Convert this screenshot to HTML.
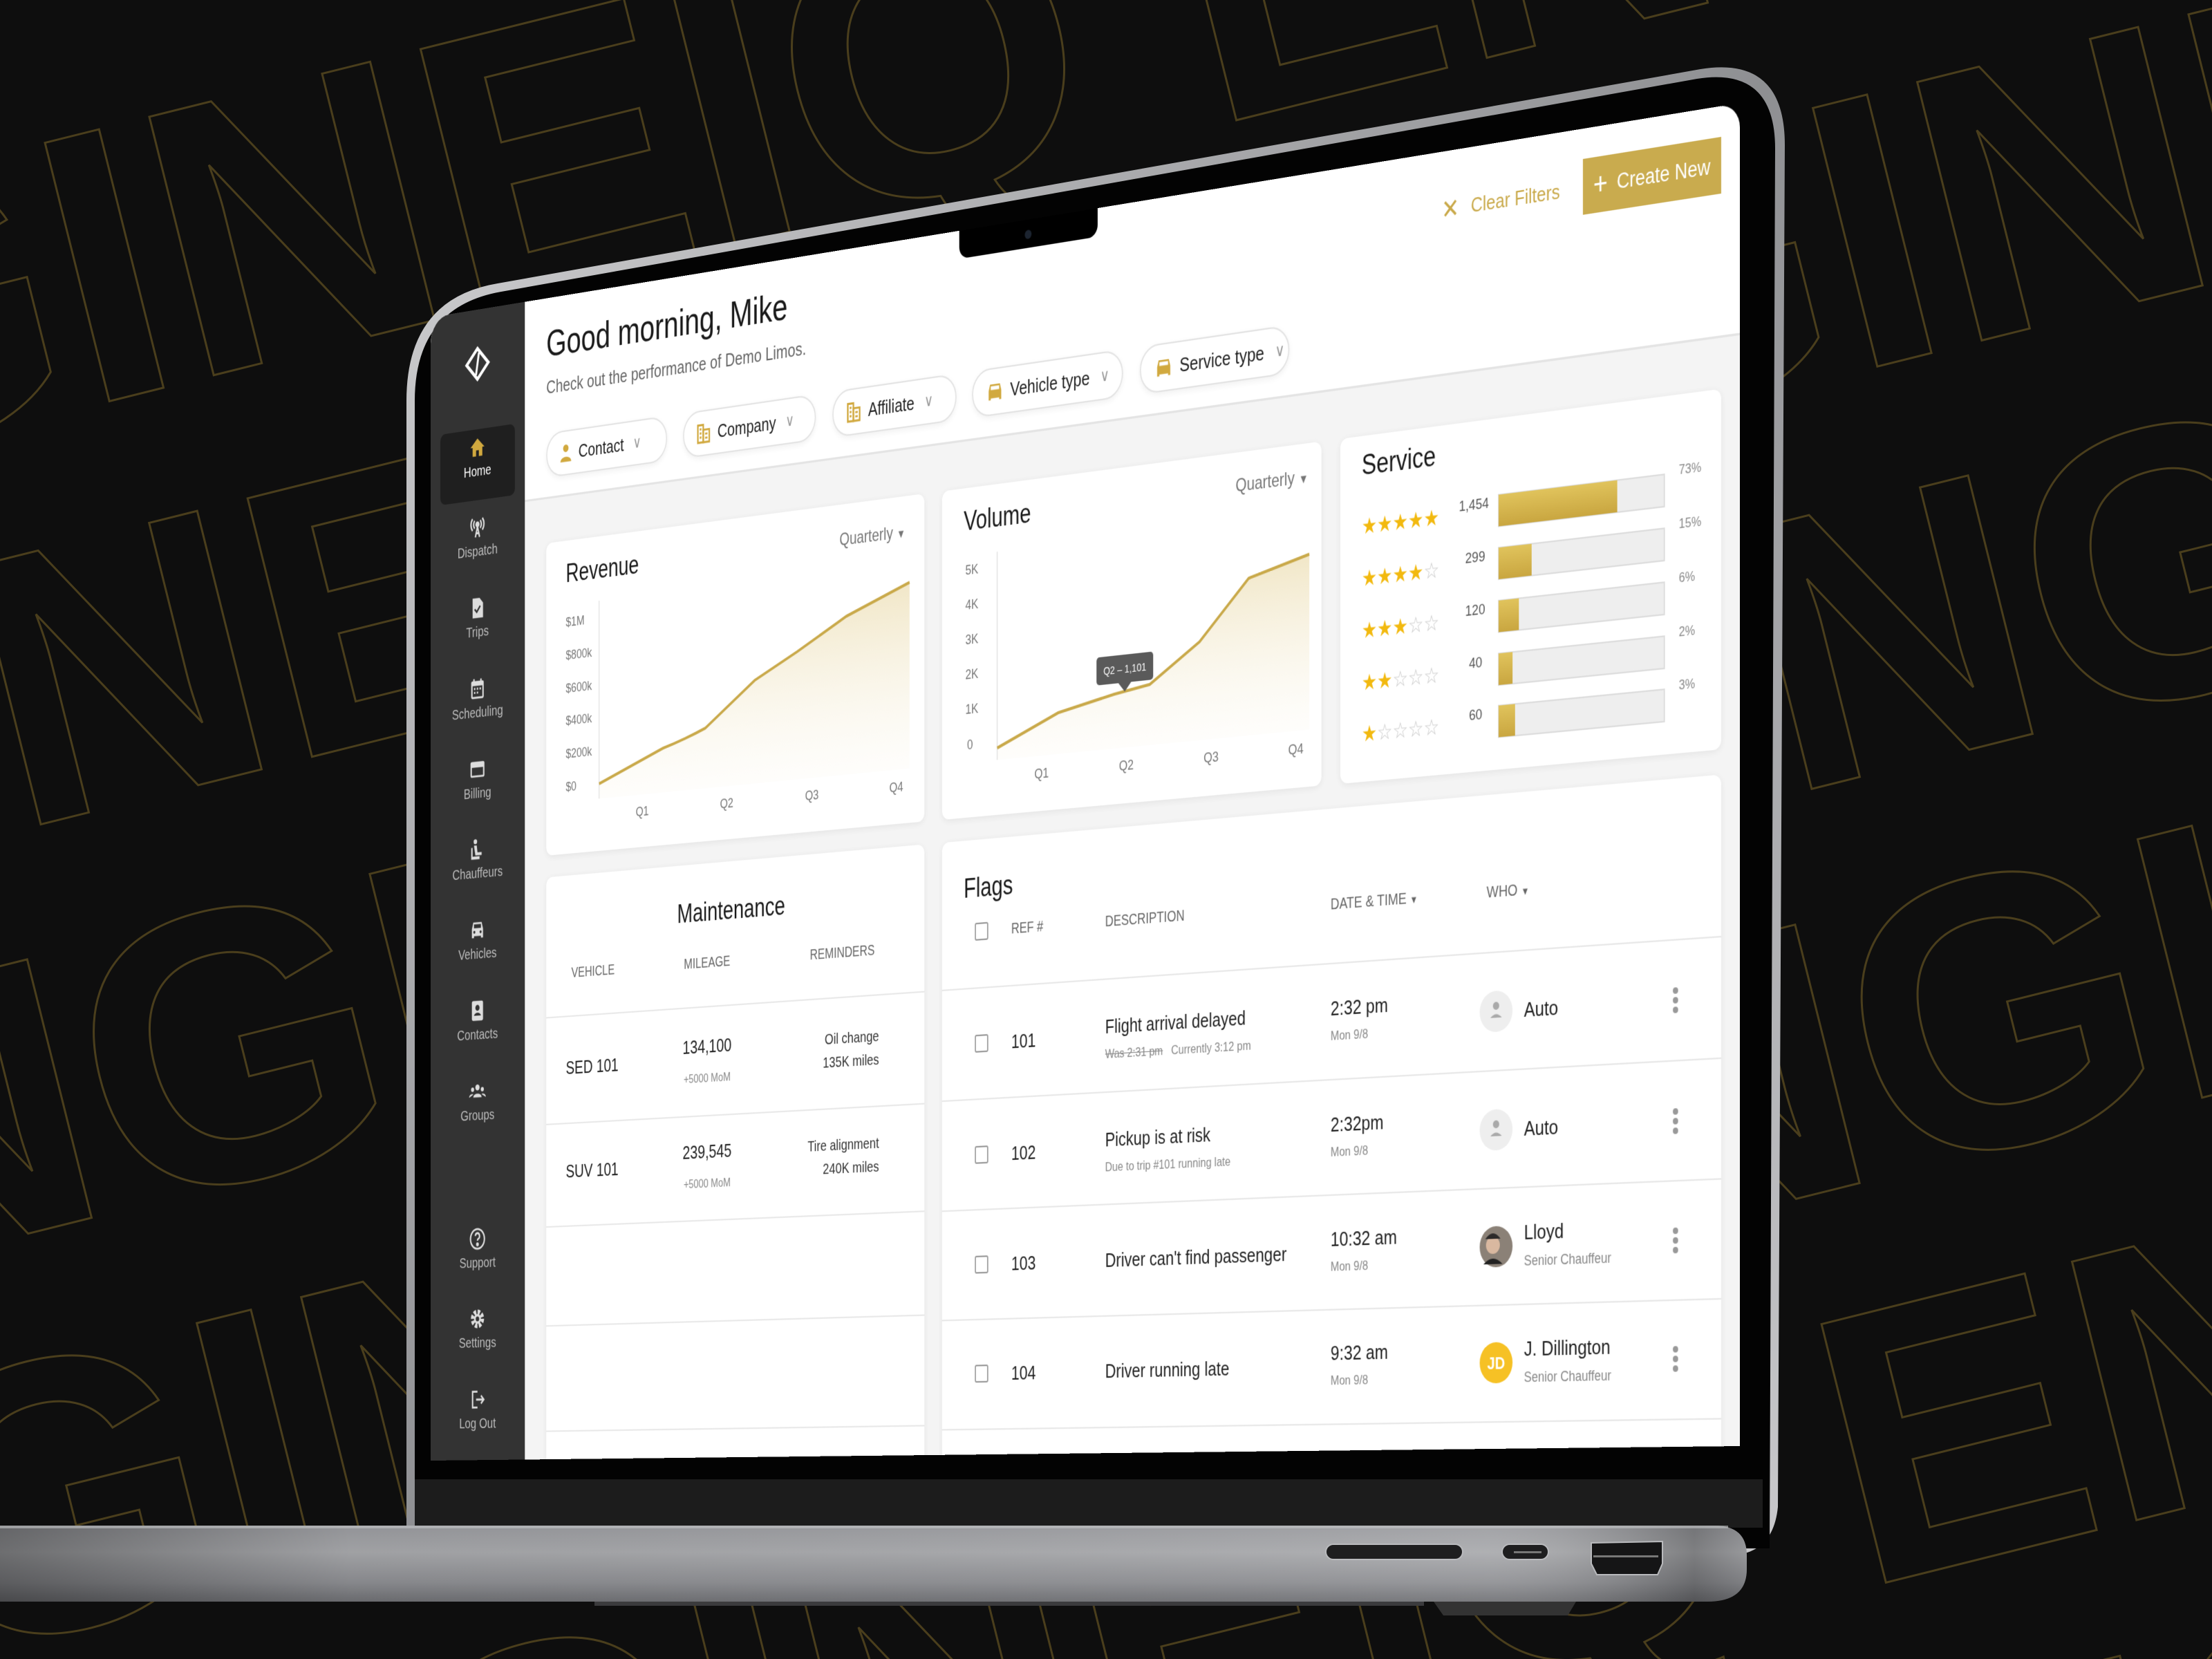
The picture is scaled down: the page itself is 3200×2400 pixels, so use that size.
<!DOCTYPE html>
<html><head><meta charset="utf-8">
<style>
*{margin:0;padding:0;box-sizing:border-box}
html,body{width:3200px;height:2400px;overflow:hidden;background:#0e0e0e;font-family:"Liberation Sans",sans-serif}
.a{position:absolute}
#scr{position:absolute;left:0;top:0;width:2300px;height:1654px;transform-origin:0 0;
transform:matrix3d(0.66071,-0.14442,0,-0.00006467,0,1,0,0,0,0,1,0,623,459,0,1);
background:#fff;overflow:hidden;border-radius:38px 30px 0 0}
.side{left:0;top:0;width:192px;height:1654px;background:#333;border-radius:38px 0 0 0}
.si{left:0;width:192px;text-align:center;color:#bdbdbd;font-size:21px}
.si svg{display:block;margin:0 auto 6px}
.chip{height:64px;top:192px;border:2px solid #e3e3e3;border-radius:32px;background:#fff;box-shadow:0 3px 8px rgba(0,0,0,.06);font-size:26px;color:#222;display:flex;align-items:center;padding-left:24px;gap:12px}
.chip .cv{color:#999;font-size:22px;margin-left:6px}
.card{background:#fff;border-radius:12px;box-shadow:0 2px 10px rgba(0,0,0,.07)}
.t{line-height:1;white-space:nowrap}
.yl{font-size:19px;color:#777}
.hd{font-size:20px;color:#666}
.g{color:#888}
</style></head><body>
<svg class="a" style="left:0;top:0" width="3200" height="2400" viewBox="0 0 3200 2400">
<g transform="rotate(-14 1600 1200)" fill="none" stroke="#4a3e1c" stroke-width="3" font-family="Liberation Sans" font-weight="bold" font-size="560">
<text x="-900" y="250">ENGINEIQ ENGINEIQ</text>
<text x="-1300" y="820">ENGINEIQ ENGINEIQ</text>
<text x="-700" y="1390">ENGINEIQ ENGINEIQ</text>
<text x="-1100" y="1960">ENGINEIQ ENGINEIQ</text>
<text x="-500" y="2530">ENGINEIQ ENGINEIQ</text>
<text x="-900" y="3100">ENGINEIQ ENGINEIQ</text>
</g>
<defs>
<linearGradient id="rim" x1="0" y1="0" x2="1" y2="1"><stop offset="0" stop-color="#d4d4d6"/><stop offset=".5" stop-color="#8e8f92"/><stop offset="1" stop-color="#c9c9cc"/></linearGradient>
<linearGradient id="base" x1="0" y1="0" x2="0" y2="1"><stop offset="0" stop-color="#9a9b9f"/><stop offset=".35" stop-color="#a8a9ac"/><stop offset=".75" stop-color="#8d8e92"/><stop offset="1" stop-color="#6f7074"/></linearGradient>
<linearGradient id="baseh" x1="0" y1="0" x2="1" y2="0"><stop offset="0" stop-color="#000" stop-opacity=".35"/><stop offset=".2" stop-color="#000" stop-opacity=".05"/><stop offset=".85" stop-color="#fff" stop-opacity=".08"/><stop offset=".97" stop-color="#000" stop-opacity=".25"/><stop offset="1" stop-color="#000" stop-opacity=".1"/></linearGradient>
</defs>
<path d="M588,580 Q588,432 720,410 L2460,100 Q2582,80 2582,210 L2572,2180 Q2565,2250 2500,2250 L588,2250 Z" fill="url(#rim)"/>
<path d="M600,580 Q600,444 725,422 L2455,114 Q2568,96 2568,215 L2560,2240 L600,2240 Z" fill="#030303"/>
<rect x="600" y="2140" width="1950" height="70" fill="#1c1c1c"/>
<path d="M0,2207 L2480,2207 Q2527,2207 2527,2250 L2527,2270 Q2527,2317 2470,2317 L0,2317 Z" fill="url(#base)"/>
<path d="M0,2207 L2480,2207 Q2527,2207 2527,2250 L2527,2270 Q2527,2317 2470,2317 L0,2317 Z" fill="url(#baseh)"/>
<rect x="0" y="2207" width="2500" height="4" fill="#c3c4c6" opacity=".6"/>
<rect x="1918" y="2234" width="198" height="22" rx="11" fill="#1e1e1f" stroke="#b9babd" stroke-width="2"/>
<rect x="2173" y="2234" width="67" height="22" rx="11" fill="#1e1e1f" stroke="#b9babd" stroke-width="2"/>
<rect x="2190" y="2244" width="40" height="3" fill="#777"/>
<path d="M2302,2232 L2405,2230 L2405,2262 L2398,2278 L2310,2278 L2302,2262 Z" fill="#151516" stroke="#b9babd" stroke-width="2"/>
<rect x="2305" y="2250" width="94" height="3" fill="#777"/>
<path d="M2074,2317 L2280,2317 L2268,2337 L2088,2337 Z" fill="#333"/>
<rect x="860" y="2317" width="1200" height="6" fill="#3b3b3d"/>
</svg>

<div id="scr">
  <div class="a side"></div>
  <div class="a" style="left:20px;top:172px;width:152px;height:102px;background:#1f1f1f;border-radius:10px"></div>
  <svg class="a" style="left:70px;top:52px" width="52" height="52" viewBox="0 0 52 52"><path d="M26,4 L48,26 L26,48 L4,26 Z" fill="none" stroke="#fff" stroke-width="5"/><path d="M29,10 L23,42" stroke="#fff" stroke-width="4"/></svg>

  <div class="a si" style="top:181px;color:#fff"><svg width="34" height="34" viewBox="0 0 24 24"><path d="M12 3 L2 12 H5 V21 H10 V15 H14 V21 H19 V12 H22 Z" fill="#d1a93f"/></svg>Home</div>
  <div class="a si" style="top:296px"><svg width="34" height="34" viewBox="0 0 24 24" fill="none" stroke="#ddd" stroke-width="2"><circle cx="12" cy="9" r="2" fill="#ddd"/><path d="M8 5a6 6 0 0 0 0 8M16 5a6 6 0 0 1 0 8M5 3a9 9 0 0 0 0 12M19 3a9 9 0 0 1 0 12M12 11 L9 22M12 11 L15 22M10 18h4"/></svg>Dispatch</div>
  <div class="a si" style="top:412px"><svg width="34" height="34" viewBox="0 0 24 24"><path d="M5 2h10l5 5v15H5z" fill="#ddd"/><path d="M8 13l3 3 5-6" stroke="#333" stroke-width="2" fill="none"/></svg>Trips</div>
  <div class="a si" style="top:528px"><svg width="34" height="34" viewBox="0 0 24 24"><rect x="3" y="4" width="18" height="18" rx="2" fill="#ddd"/><rect x="5" y="9" width="14" height="11" fill="#333"/><path d="M7 12h2M11 12h2M15 12h2M7 16h2M11 16h2" stroke="#ddd" stroke-width="2"/><path d="M7 2v4M17 2v4" stroke="#ddd" stroke-width="2"/></svg>Scheduling</div>
  <div class="a si" style="top:644px"><svg width="34" height="34" viewBox="0 0 24 24"><rect x="2" y="4" width="20" height="16" rx="2" fill="#ddd"/><rect x="4" y="10" width="16" height="8" fill="#333"/></svg>Billing</div>
  <div class="a si" style="top:759px"><svg width="34" height="34" viewBox="0 0 24 24" fill="#ddd"><circle cx="9" cy="4" r="2.5"/><path d="M7 8h4l1 7h6v3h-9z"/><path d="M5 10v9h10v3H3V10z"/></svg>Chauffeurs</div>
  <div class="a si" style="top:875px"><svg width="34" height="34" viewBox="0 0 24 24"><path d="M4 11 L6 4 H18 L20 11 V20 H17 V18 H7 V20 H4 Z" fill="#ddd"/><rect x="7" y="6" width="10" height="4" fill="#333"/><circle cx="7.5" cy="14" r="1.5" fill="#333"/><circle cx="16.5" cy="14" r="1.5" fill="#333"/></svg>Vehicles</div>
  <div class="a si" style="top:991px"><svg width="34" height="34" viewBox="0 0 24 24"><rect x="4" y="2" width="16" height="20" rx="2" fill="#ddd"/><circle cx="12" cy="9" r="3" fill="#333"/><path d="M7 17c1-4 9-4 10 0z" fill="#333"/></svg>Contacts</div>
  <div class="a si" style="top:1107px"><svg width="34" height="34" viewBox="0 0 24 24" fill="#ddd"><circle cx="12" cy="8" r="3"/><circle cx="5" cy="10" r="2.2"/><circle cx="19" cy="10" r="2.2"/><path d="M6 18c0-5 12-5 12 0zM0 18c0-4 6-4 6-3zM24 18c0-4-6-4-6-3z"/></svg>Groups</div>
  <div class="a si" style="top:1319px"><svg width="34" height="34" viewBox="0 0 24 24" fill="none" stroke="#ddd" stroke-width="2"><circle cx="12" cy="12" r="10"/><path d="M9 9a3 3 0 1 1 4 3c-1 .5-1 1-1 2"/><circle cx="12" cy="17.5" r="1" fill="#ddd"/></svg>Support</div>
  <div class="a si" style="top:1434px"><svg width="34" height="34" viewBox="0 0 24 24"><circle cx="12" cy="12" r="7" fill="none" stroke="#ddd" stroke-width="5" stroke-dasharray="3.5 2"/><circle cx="12" cy="12" r="5" fill="#ddd"/><circle cx="12" cy="12" r="2.5" fill="#333"/></svg>Settings</div>
  <div class="a si" style="top:1550px"><svg width="34" height="34" viewBox="0 0 24 24" fill="none" stroke="#ddd" stroke-width="2"><path d="M12 4H5v16h7M10 12h11M17 8l4 4-4 4"/></svg>Log Out</div>

  <!-- header -->
  <div class="a t" style="left:235px;top:40px;font-size:52px;color:#1a1a1a">Good morning, Mike</div>
  <div class="a t" style="left:235px;top:114px;font-size:26px;color:#666">Check out the performance of Demo Limos.</div>
  <div class="a chip" style="left:235px;width:238px"><svg width="26" height="30" viewBox="0 0 24 28"><circle cx="12" cy="8" r="5" fill="#d1a93f"/><path d="M2 26c0-9 20-9 20 0z" fill="#d1a93f"/></svg>Contact<span class="cv">∨</span></div>
  <div class="a chip" style="left:504px;width:252px"><svg width="28" height="30" viewBox="0 0 24 26" fill="none" stroke="#d1a93f" stroke-width="2.5"><rect x="2" y="3" width="9" height="21"/><rect x="11" y="9" width="10" height="15"/><path d="M5 8h3M5 13h3M5 18h3M14 14h4M14 19h4"/></svg>Company<span class="cv">∨</span></div>
  <div class="a chip" style="left:787px;width:227px"><svg width="28" height="30" viewBox="0 0 24 26" fill="none" stroke="#d1a93f" stroke-width="2.5"><rect x="2" y="3" width="9" height="21"/><rect x="11" y="9" width="10" height="15"/><path d="M5 8h3M5 13h3M5 18h3M14 14h4M14 19h4"/></svg>Affiliate<span class="cv">∨</span></div>
  <div class="a chip" style="left:1042px;width:266px"><svg width="30" height="28" viewBox="0 0 24 22"><path d="M3 10 L5 3 H19 L21 10 V20 H18 V18 H6 V20 H3 Z" fill="#d1a93f"/><rect x="6" y="5" width="12" height="4" fill="#fff"/></svg>Vehicle type<span class="cv">∨</span></div>
  <div class="a chip" style="left:1337px;width:253px"><svg width="30" height="28" viewBox="0 0 24 22"><path d="M3 10 L5 3 H19 L21 10 V20 H18 V18 H6 V20 H3 Z" fill="#d1a93f"/><rect x="6" y="5" width="12" height="4" fill="#fff"/></svg>Service type<span class="cv">∨</span></div>

  <div class="a t" style="left:1838px;top:58px;font-size:34px;color:#c9a94a">✕</div>
  <div class="a t" style="left:1885px;top:61px;font-size:26px;color:#c9a94a">Clear Filters</div>
  <div class="a" style="left:2061px;top:38px;width:211px;height:70px;background:#c9ab4e;color:#fff;font-size:27px;display:flex;align-items:center;justify-content:center;gap:14px"><span style="font-size:38px;line-height:1">+</span>Create New</div>
  <div class="a" style="left:1019px;top:0;width:245px;height:38px;background:#000;border-radius:0 0 16px 16px"></div>
  <div class="a" style="left:1136px;top:14px;width:12px;height:12px;border-radius:6px;background:#1c2430"></div>

  <!-- content bg -->
  <div class="a" style="left:192px;top:283px;width:2108px;height:1371px;background:#f4f4f4;border-top:3px solid #e4e4e4"></div>

  <!-- cards -->
  <div class="a card" style="left:235px;top:349px;width:721px;height:445px"></div>
  <div class="a card" style="left:988px;top:349px;width:655px;height:445px"></div>
  <div class="a card" style="left:1674px;top:349px;width:598px;height:445px"></div>
  <div class="a card" style="left:235px;top:825px;width:721px;height:900px"></div>
  <div class="a card" style="left:988px;top:825px;width:1284px;height:900px"></div>

  <svg class="a" style="left:0;top:0" width="2300" height="1654" viewBox="0 0 2300 1654">
    <defs><linearGradient id="gf" x1="0" y1="0" x2="0" y2="1"><stop offset="0" stop-color="#e6d39a" stop-opacity=".55"/><stop offset="1" stop-color="#f5eed8" stop-opacity=".1"/></linearGradient>
    <linearGradient id="bf" x1="0" y1="0" x2="0" y2="1"><stop offset="0" stop-color="#e0c35c"/><stop offset="1" stop-color="#c9a640"/></linearGradient></defs>
    <line x1="340" y1="440" x2="340" y2="720" stroke="#e6e6e6" stroke-width="2"/>
    <path d="M340,699 L465,658 Q510,648 547,636 L641,577 L721,544 L813,503 L929,467 L929,720 L340,720 Z" fill="url(#gf)"/>
    <path d="M340,699 L465,658 Q510,648 547,636 L641,577 L721,544 L813,503 L929,467" fill="none" stroke="#c9a94a" stroke-width="4"/>
    <line x1="1087" y1="440" x2="1087" y2="720" stroke="#e6e6e6" stroke-width="2"/>
    <path d="M1087,704 L1195,665 L1293,648 L1354,640 L1439,591 L1522,515 L1623,493 L1623,720 L1087,720 Z" fill="url(#gf)"/>
    <path d="M1087,704 L1195,665 L1293,648 L1354,640 L1439,591 L1522,515 L1623,493" fill="none" stroke="#c9a94a" stroke-width="4"/>
    <rect x="1262" y="597" width="98" height="37" rx="5" fill="#5a5a5a"/>
    <path d="M1300,634 L1311,646 L1322,634 Z" fill="#5a5a5a"/>
    <text x="1311" y="621" font-size="15" fill="#fff" text-anchor="middle" font-family="Liberation Sans">Q2 – 1,101</text>
    <!-- table lines -->
    <g stroke="#e8e8e8" stroke-width="2">
      <line x1="235" y1="1025" x2="956" y2="1025"/><line x1="235" y1="1177" x2="956" y2="1177"/><line x1="235" y1="1323" x2="956" y2="1323"/><line x1="235" y1="1464" x2="956" y2="1464"/><line x1="235" y1="1614" x2="956" y2="1614"/>
      <line x1="988" y1="1025" x2="2272" y2="1025"/><line x1="988" y1="1175" x2="2272" y2="1175"/><line x1="988" y1="1324" x2="2272" y2="1324"/><line x1="988" y1="1472" x2="2272" y2="1472"/><line x1="988" y1="1620" x2="2272" y2="1620"/>
    </g>
    <!-- service bars -->
    <g>
      <rect x="1929" y="446" width="257" height="40" fill="#eee" stroke="#ddd" stroke-width="2"/><rect x="1929" y="446" width="185" height="40" fill="url(#bf)"/>
      <rect x="1929" y="513" width="257" height="40" fill="#eee" stroke="#ddd" stroke-width="2"/><rect x="1929" y="513" width="52" height="40" fill="url(#bf)"/>
      <rect x="1929" y="580" width="257" height="40" fill="#eee" stroke="#ddd" stroke-width="2"/><rect x="1929" y="580" width="32" height="40" fill="url(#bf)"/>
      <rect x="1929" y="647" width="257" height="40" fill="#eee" stroke="#ddd" stroke-width="2"/><rect x="1929" y="647" width="22" height="40" fill="url(#bf)"/>
      <rect x="1929" y="713" width="257" height="40" fill="#eee" stroke="#ddd" stroke-width="2"/><rect x="1929" y="713" width="26" height="40" fill="url(#bf)"/>
    </g>
    <!-- checkboxes -->
    <g fill="#fff" stroke="#999" stroke-width="2">
      <rect x="1048" y="938" width="22" height="22" rx="2"/><rect x="1048" y="1089" width="22" height="22" rx="2"/><rect x="1048" y="1239" width="22" height="22" rx="2"/><rect x="1048" y="1387" width="22" height="22" rx="2"/><rect x="1048" y="1534" width="22" height="22" rx="2"/>
    </g>
    <!-- avatars -->
    <circle cx="1925" cy="1100" r="26" fill="#eee"/><circle cx="1925" cy="1093" r="5" fill="#aaa"/><path d="M1916,1108 q9,-9 18,0z" fill="#aaa"/>
    <circle cx="1925" cy="1250" r="26" fill="#eee"/><circle cx="1925" cy="1243" r="5" fill="#aaa"/><path d="M1916,1258 q9,-9 18,0z" fill="#aaa"/>
    <circle cx="1925" cy="1398" r="26" fill="#8b8177"/><circle cx="1920" cy="1396" r="11" fill="#d9b8a0"/><path d="M1908,1388 q12,-14 24,0z" fill="#2c2a2a"/><path d="M1905,1420 q15,-14 30,0z" fill="#222"/>
    <circle cx="1925" cy="1545" r="26" fill="#f6c125"/>
    <text x="1925" y="1553" font-size="22" font-weight="bold" fill="#fff" text-anchor="middle" font-family="Liberation Sans">JD</text>
    <g fill="#999"><circle cx="2203" cy="1088" r="4"/><circle cx="2203" cy="1100" r="4"/><circle cx="2203" cy="1112" r="4"/>
    <circle cx="2203" cy="1238" r="4"/><circle cx="2203" cy="1250" r="4"/><circle cx="2203" cy="1262" r="4"/>
    <circle cx="2203" cy="1386" r="4"/><circle cx="2203" cy="1398" r="4"/><circle cx="2203" cy="1410" r="4"/>
    <circle cx="2203" cy="1533" r="4"/><circle cx="2203" cy="1545" r="4"/><circle cx="2203" cy="1557" r="4"/></g>
  </svg>

  <!-- revenue -->
  <div class="a t" style="left:274px;top:378px;font-size:36px;color:#1a1a1a">Revenue</div>
  <div class="a t" style="left:800px;top:386px;font-size:24px;color:#777">Quarterly <span style="font-size:16px">▼</span></div>
  <div class="a t yl" style="left:274px;top:456px">$1M</div>
  <div class="a t yl" style="left:274px;top:503px">$800k</div>
  <div class="a t yl" style="left:274px;top:550px">$600k</div>
  <div class="a t yl" style="left:274px;top:596px">$400k</div>
  <div class="a t yl" style="left:274px;top:643px">$200k</div>
  <div class="a t yl" style="left:274px;top:690px">$0</div>
  <div class="a t yl" style="left:412px;top:735px">Q1</div>
  <div class="a t yl" style="left:575px;top:735px">Q2</div>
  <div class="a t yl" style="left:736px;top:735px">Q3</div>
  <div class="a t yl" style="left:892px;top:735px">Q4</div>

  <!-- volume -->
  <div class="a t" style="left:1027px;top:376px;font-size:36px;color:#1a1a1a">Volume</div>
  <div class="a t" style="left:1500px;top:381px;font-size:24px;color:#777">Quarterly <span style="font-size:16px">▼</span></div>
  <div class="a t yl" style="left:1030px;top:451px">5K</div>
  <div class="a t yl" style="left:1030px;top:498px">4K</div>
  <div class="a t yl" style="left:1030px;top:545px">3K</div>
  <div class="a t yl" style="left:1030px;top:592px">2K</div>
  <div class="a t yl" style="left:1030px;top:639px">1K</div>
  <div class="a t yl" style="left:1033px;top:687px">0</div>
  <div class="a t yl" style="left:1153px;top:735px">Q1</div>
  <div class="a t yl" style="left:1301px;top:735px">Q2</div>
  <div class="a t yl" style="left:1446px;top:735px">Q3</div>
  <div class="a t yl" style="left:1588px;top:735px">Q4</div>

  <!-- service -->
  <div class="a t" style="left:1709px;top:369px;font-size:36px;color:#1a1a1a">Service</div>
  <div class="a t" style="left:1709px;top:452px;font-size:28px;color:#f2b90f">★★★★★</div>
  <div class="a t" style="left:1709px;top:519px;font-size:28px;color:#f2b90f">★★★★<span style="color:#ccc">☆</span></div>
  <div class="a t" style="left:1709px;top:586px;font-size:28px;color:#f2b90f">★★★<span style="color:#ccc">☆☆</span></div>
  <div class="a t" style="left:1709px;top:653px;font-size:28px;color:#f2b90f">★★<span style="color:#ccc">☆☆☆</span></div>
  <div class="a t" style="left:1709px;top:719px;font-size:28px;color:#f2b90f">★<span style="color:#ccc">☆☆☆☆</span></div>
  <div class="a t" style="left:1866px;top:446px;font-size:19px;color:#555">1,454</div>
  <div class="a t" style="left:1876px;top:513px;font-size:19px;color:#555">299</div>
  <div class="a t" style="left:1876px;top:580px;font-size:19px;color:#555">120</div>
  <div class="a t" style="left:1882px;top:647px;font-size:19px;color:#555">40</div>
  <div class="a t" style="left:1882px;top:713px;font-size:19px;color:#555">60</div>
  <div class="a t g" style="left:2208px;top:434px;font-size:17px">73%</div>
  <div class="a t g" style="left:2208px;top:501px;font-size:17px">15%</div>
  <div class="a t g" style="left:2208px;top:568px;font-size:17px">6%</div>
  <div class="a t g" style="left:2208px;top:635px;font-size:17px">2%</div>
  <div class="a t g" style="left:2208px;top:701px;font-size:17px">3%</div>

  <!-- maintenance -->
  <div class="a t" style="left:235px;width:721px;text-align:center;top:875px;font-size:36px;color:#1a1a1a">Maintenance</div>
  <div class="a t hd" style="left:285px;top:954px">VEHICLE</div>
  <div class="a t hd" style="left:450px;width:200px;text-align:center;top:954px">MILEAGE</div>
  <div class="a t hd" style="left:705px;width:200px;text-align:center;top:954px">REMINDERS</div>
  <div class="a t" style="left:274px;top:1085px;font-size:26px;color:#222">SED 101</div>
  <div class="a t" style="left:450px;width:200px;text-align:center;top:1067px;font-size:26px;color:#222">134,100</div>
  <div class="a t g" style="left:450px;width:200px;text-align:center;top:1116px;font-size:17px">+5000 MoM</div>
  <div class="a t" style="left:673px;width:200px;text-align:right;top:1066px;font-size:21px;color:#333;line-height:1.5">Oil change<br>135K miles</div>
  <div class="a t" style="left:274px;top:1232px;font-size:26px;color:#222">SUV 101</div>
  <div class="a t" style="left:450px;width:200px;text-align:center;top:1214px;font-size:26px;color:#222">239,545</div>
  <div class="a t g" style="left:450px;width:200px;text-align:center;top:1263px;font-size:17px">+5000 MoM</div>
  <div class="a t" style="left:673px;width:200px;text-align:right;top:1212px;font-size:21px;color:#333;line-height:1.5">Tire alignment<br>240K miles</div>

  <!-- flags -->
  <div class="a t" style="left:1027px;top:872px;font-size:36px;color:#1a1a1a">Flags</div>
  <div class="a t hd" style="left:1112px;top:939px">REF #</div>
  <div class="a t hd" style="left:1277px;top:939px">DESCRIPTION</div>
  <div class="a t hd" style="left:1658px;top:939px">DATE &amp; TIME <span style="font-size:13px">▼</span></div>
  <div class="a t hd" style="left:1910px;top:939px">WHO <span style="font-size:13px">▼</span></div>

  <div class="a t" style="left:1112px;top:1087px;font-size:26px;color:#222">101</div>
  <div class="a t" style="left:1277px;top:1075px;font-size:26px;color:#222">Flight arrival delayed</div>
  <div class="a t g" style="left:1277px;top:1116px;font-size:17px"><s>Was 2:31 pm</s>&nbsp;&nbsp; Currently 3:12 pm</div>
  <div class="a t" style="left:1658px;top:1070px;font-size:26px;color:#222">2:32 pm</div>
  <div class="a t g" style="left:1658px;top:1110px;font-size:17px">Mon 9/8</div>
  <div class="a t" style="left:1969px;top:1087px;font-size:26px;color:#222">Auto</div>

  <div class="a t" style="left:1112px;top:1237px;font-size:26px;color:#222">102</div>
  <div class="a t" style="left:1277px;top:1225px;font-size:26px;color:#222">Pickup is at risk</div>
  <div class="a t g" style="left:1277px;top:1266px;font-size:17px">Due to trip #101 running late</div>
  <div class="a t" style="left:1658px;top:1220px;font-size:26px;color:#222">2:32pm</div>
  <div class="a t g" style="left:1658px;top:1260px;font-size:17px">Mon 9/8</div>
  <div class="a t" style="left:1969px;top:1237px;font-size:26px;color:#222">Auto</div>

  <div class="a t" style="left:1112px;top:1385px;font-size:26px;color:#222">103</div>
  <div class="a t" style="left:1277px;top:1385px;font-size:26px;color:#222">Driver can't find passenger</div>
  <div class="a t" style="left:1658px;top:1368px;font-size:26px;color:#222">10:32 am</div>
  <div class="a t g" style="left:1658px;top:1408px;font-size:17px">Mon 9/8</div>
  <div class="a t" style="left:1969px;top:1368px;font-size:26px;color:#222">Lloyd</div>
  <div class="a t g" style="left:1969px;top:1408px;font-size:18px">Senior Chauffeur</div>

  <div class="a t" style="left:1112px;top:1532px;font-size:26px;color:#222">104</div>
  <div class="a t" style="left:1277px;top:1532px;font-size:26px;color:#222">Driver running late</div>
  <div class="a t" style="left:1658px;top:1515px;font-size:26px;color:#222">9:32 am</div>
  <div class="a t g" style="left:1658px;top:1555px;font-size:17px">Mon 9/8</div>
  <div class="a t" style="left:1969px;top:1515px;font-size:26px;color:#222">J. Dillington</div>
  <div class="a t g" style="left:1969px;top:1555px;font-size:18px">Senior Chauffeur</div>
</div>
</body></html>
